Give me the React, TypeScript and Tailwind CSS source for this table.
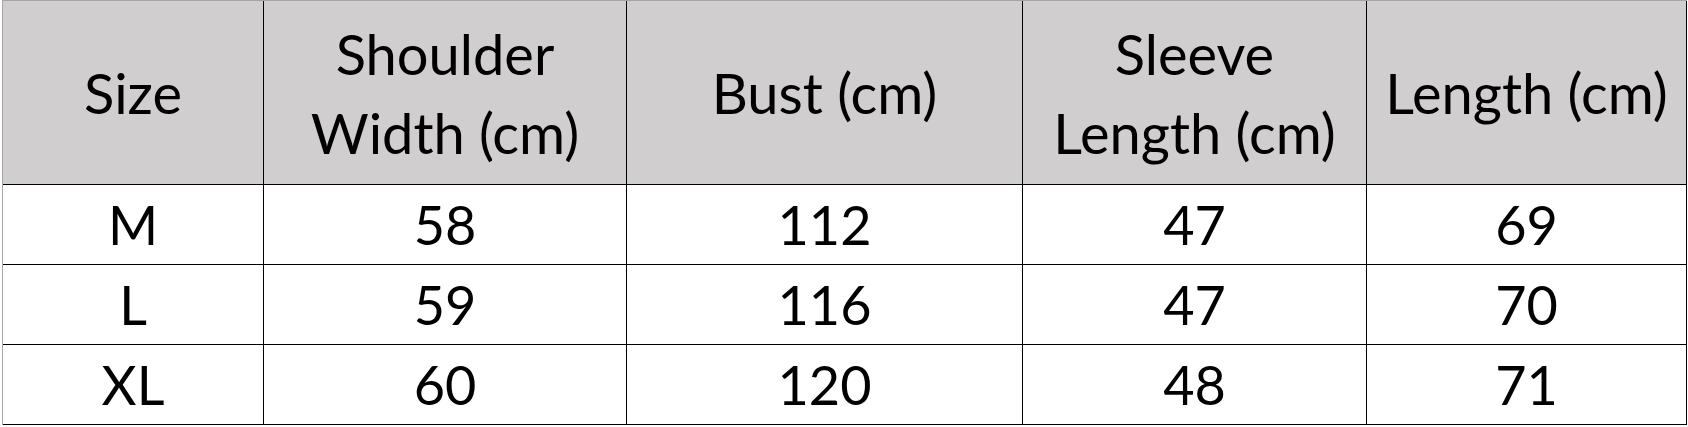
const headers = [
  ['Size'],
  ['Shoulder', 'Width (cm)'],
  ['Bust (cm)'],
  ['Sleeve', 'Length (cm)'],
  ['Length (cm)'],
]

const rows = [
  ['M', '58', '112', '47', '69'],
  ['L', '59', '116', '47', '70'],
  ['XL', '60', '120', '48', '71'],
]

export default function App() {
  return (
    <div className="h-[427px] w-[1688px] overflow-hidden bg-white pl-[2px] font-['Lato',_'Liberation_Sans',_sans-serif] text-black">
      <div className="grid w-max grid-cols-[260px_362px_395px_343px_319px] grid-rows-[183px_79px_79px_79px] gap-px border-l border-t border-[#a6a6a6] bg-black pb-px pr-px">
        {headers.map((lines, i) => (
          <div
            key={i}
            className="flex flex-col items-center justify-center bg-[#d0cece] text-center text-[56px] leading-[79px]"
          >
            {lines.map((l) => (
              <span key={l}>{l}</span>
            ))}
          </div>
        ))}
        {rows.map((row) =>
          row.map((cell, j) => (
            <div
              key={row[0] + j}
              className="flex items-center justify-center bg-white text-[54px] leading-none"
            >
              {cell}
            </div>
          )),
        )}
      </div>
    </div>
  )
}
